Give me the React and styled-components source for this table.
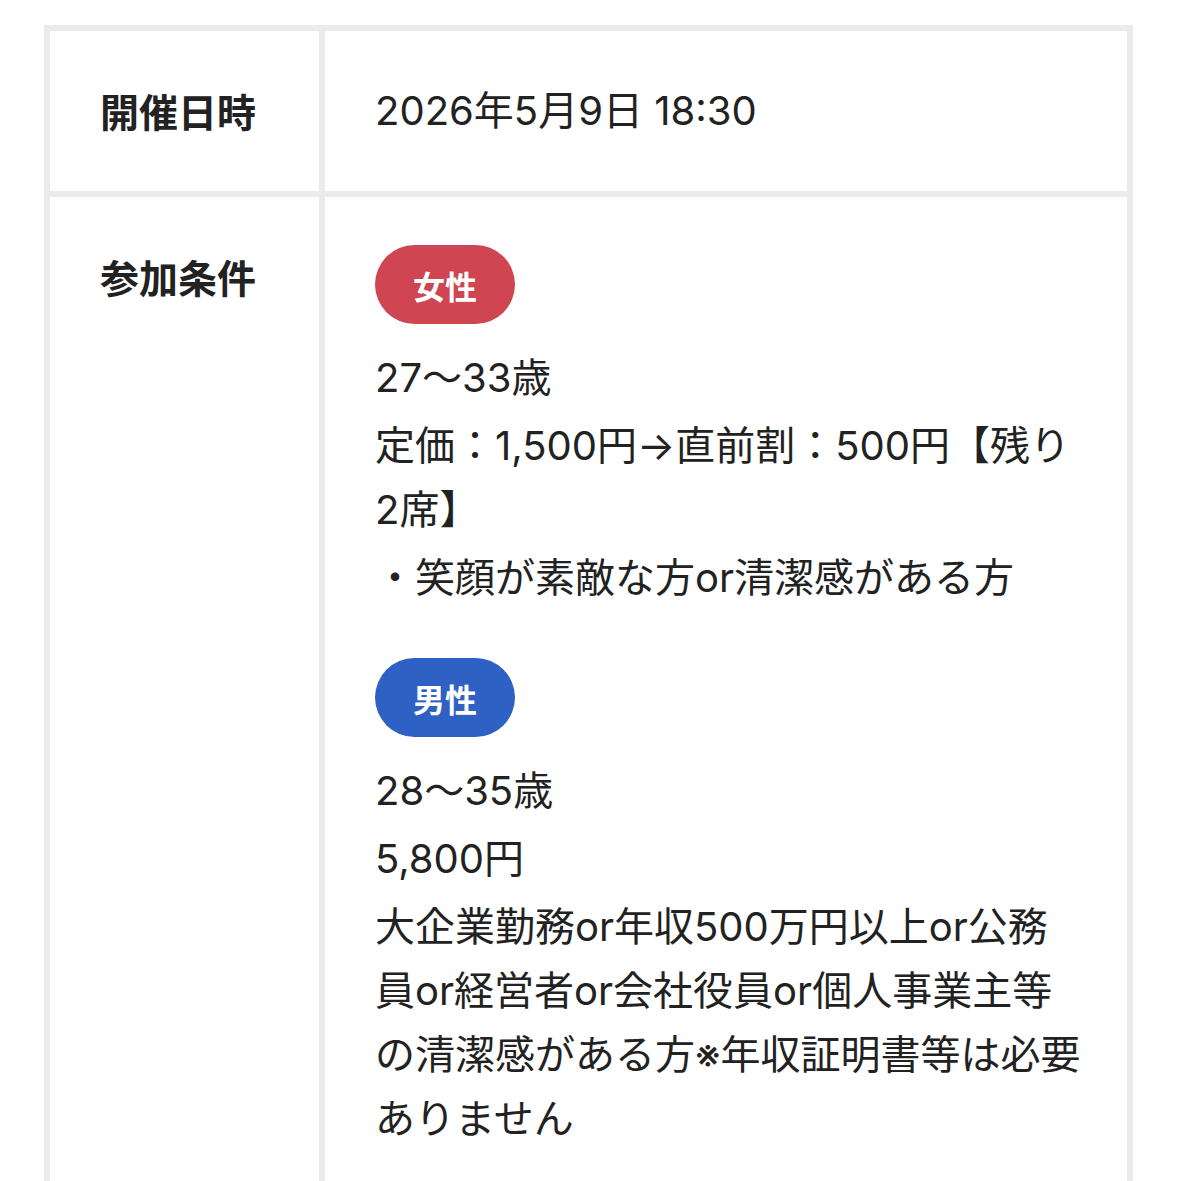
import styled, { createGlobalStyle } from 'styled-components';

const GlobalStyle = createGlobalStyle`
  body {
    margin: 0;
    background: #fff;
    color: #222;
    font-family: Inter, 'Noto Sans CJK JP', sans-serif;
  }
`;

const Page = styled.div`
  height: 100vh;
  overflow: hidden;
  box-sizing: border-box;
  padding: 25px 45px 0 44px;
`;

const InfoTable = styled.div`
  display: grid;
  grid-template-columns: 269px 1fr;
  gap: 6px;
  padding: 6px;
  background: #ebebeb;
`;

const Label = styled.div`
  background: #fff;
  padding: 48px 0 48px 50px;
  font-size: 39px;
  line-height: 63px;
  font-weight: 700;
  font-family: 'Noto Sans CJK JP', sans-serif;
`;

const Value = styled.div`
  background: #fff;
  padding: 48px 44px 48px 50px;
  font-size: 40px;
  line-height: 64px;
`;

const Group = styled.div`
  & + & {
    margin-top: 48px;
  }
`;

const Badge = styled.span`
  display: inline-flex;
  align-items: center;
  justify-content: center;
  height: 79px;
  padding: 0 38px;
  border-radius: 40px;
  background: ${(p) => (p.$tone === 'male' ? '#2f61c4' : '#cf4551')};
  color: #fff;
  font-family: 'Noto Sans CJK JP', sans-serif;
  font-size: 32px;
  font-weight: 700;
  line-height: 1;
`;

const Lines = styled.div`
  margin-top: 22px;
`;

const Line = styled.p`
  margin: 0;
  & + & {
    margin-top: 4px;
  }
`;

const conditions = [
  {
    tone: 'female',
    label: '女性',
    lines: [
      '27〜33歳',
      '定価：1,500円→直前割：500円【残り2席】',
      '・笑顔が素敵な方or清潔感がある方',
    ],
  },
  {
    tone: 'male',
    label: '男性',
    lines: [
      '28〜35歳',
      '5,800円',
      '大企業勤務or年収500万円以上or公務員or経営者or会社役員or個人事業主等の清潔感がある方※年収証明書等は必要ありません',
    ],
  },
];

export default function App() {
  return (
    <>
      <GlobalStyle />
      <Page>
        <InfoTable>
          <Label>開催日時</Label>
          <Value>2026年5月9日 18:30</Value>
          <Label>参加条件</Label>
          <Value>
            {conditions.map((c) => (
              <Group key={c.tone}>
                <Badge $tone={c.tone}>{c.label}</Badge>
                <Lines>
                  {c.lines.map((line) => (
                    <Line key={line}>{line}</Line>
                  ))}
                </Lines>
              </Group>
            ))}
          </Value>
        </InfoTable>
      </Page>
    </>
  );
}
